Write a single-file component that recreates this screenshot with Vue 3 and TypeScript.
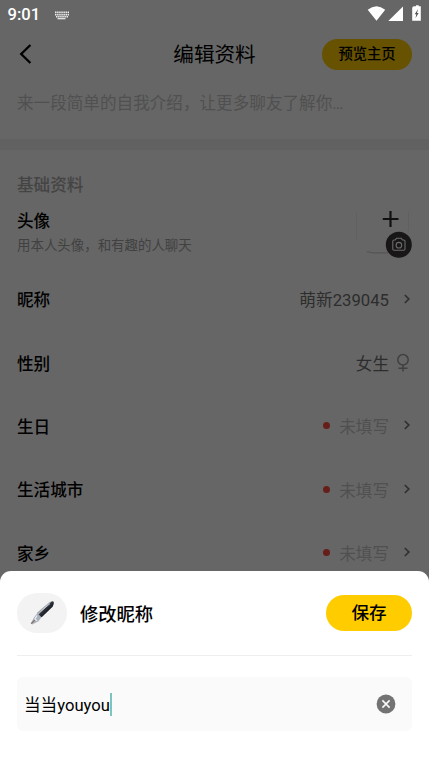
<script setup lang="ts">
interface ProfileRow {
  label: string
  value: string
  kind: 'filled' | 'gender' | 'empty'
}

const rows: ProfileRow[] = [
  { label: '昵称', value: '萌新239045', kind: 'filled' },
  { label: '性别', value: '女生', kind: 'gender' },
  { label: '生日', value: '未填写', kind: 'empty' },
  { label: '生活城市', value: '未填写', kind: 'empty' },
  { label: '家乡', value: '未填写', kind: 'empty' },
]
const nickname = '当当youyou'
</script>

<template>
  <div class="screen">
    <div class="profile">
      <div class="status">
        <span class="clock">9:01</span>
        <svg class="keyboard" width="16" height="9" viewBox="0 0 16 9">
          <path d="M1 1.3H15M1 3.6H15M2 5.7H14" stroke="#eee" stroke-width="1.6" stroke-dasharray="1.5 .6" />
          <path d="M3.5 7.7H11.5" stroke="#eee" stroke-width="1.2" />
        </svg>
        <svg class="signals" width="56" height="18" viewBox="0 0 56 18" fill="#fff">
          <path d="M.7 4.8Q9.5-2.3 18.2 4.8L9.5 15.8Z" />
          <path d="M36 1.4V16H21.3Z" />
          <path d="M47.2 1.3H49V.2H51.7V1.3H53.8V15.7H45.2V3Q45.2 1.3 47.2 1.3Z" />
          <path d="M51.1 4L47.7 9.3H49.3L48.5 13.3L51.6 8H50Z" fill="#555" />
        </svg>
      </div>
      <header class="nav">
        <svg width="14" height="22" viewBox="0 0 14 22" fill="none" stroke="#000" stroke-width="2.3">
          <path d="M12.4 2L3.2 11L12.4 20" />
        </svg>
        <h1>编辑资料</h1>
        <button class="preview">预览主页</button>
      </header>
      <p class="bio">来一段简单的自我介绍，让更多聊友了解你…</p>
      <div class="band"></div>
      <h2>基础资料</h2>
      <div class="avatar-row">
        <div>
          <div class="label">头像</div>
          <div class="hint">用本人头像，和有趣的人聊天</div>
        </div>
        <svg width="60" height="54" viewBox="0 0 60 54" fill="none">
          <path d="M4.5 5V33M56.5 4V24" stroke="#606060" />
          <path d="M15 44.5Q18 45.8 23 45.8H36" stroke="#545454" stroke-width="1.2" />
          <path d="M38.5 4V20M30.8 12H46.5" stroke="#111" stroke-width="2.2" />
          <circle cx="46.8" cy="37.8" r="13" fill="#181617" />
          <path d="M42 33H43.2L44.5 31.3H49.2L50.5 33H51.8Q53 33 53 34.2V42Q53 43.2 51.8 43.2H42Q40.8 43.2 40.8 42V34.2Q40.8 33 42 33Z" stroke="#6c6c6c" stroke-width="1.1" />
          <circle cx="46.9" cy="38.2" r="2.8" stroke="#6c6c6c" stroke-width="1.1" />
        </svg>
      </div>
      <div v-for="row in rows" :key="row.label" class="row" :class="row.kind">
        <span class="label">{{ row.label }}</span>
        <span v-if="row.kind === 'empty'" class="dot"></span>
        <span class="value">{{ row.value }}</span>
        <svg v-if="row.kind === 'gender'" class="female" width="14" height="20" viewBox="0 0 14 20" fill="none" stroke="#404040" stroke-width="1.5">
          <circle cx="7" cy="6.8" r="5.2" />
          <path d="M7 12V18.5M2.5 15.3H11.5" />
        </svg>
        <svg v-else class="chevron" width="8" height="12" viewBox="0 0 8 12" fill="none" stroke="#303030" stroke-width="1.7">
          <path d="M1.8 2L5.8 6L1.8 10" />
        </svg>
      </div>
    </div>

    <section class="sheet">
      <div class="sheet-head">
        <span class="badge">
          <svg width="26" height="26" viewBox="0 0 26 26">
            <defs>
              <linearGradient id="barrel" x1="11" y1="8" x2="17" y2="14" gradientUnits="userSpaceOnUse">
                <stop offset=".1" stop-color="#777f88" />
                <stop offset=".35" stop-color="#b4bac0" />
                <stop offset=".5" stop-color="#30343b" />
                <stop offset="1" stop-color="#15191f" />
              </linearGradient>
            </defs>
            <path d="M8.2 12.8L20.2 2.2Q23.2.4 24.7 1.7Q25.4 4 23.6 6.8L13.2 16.8Q11 18.2 9.5 17Q7.8 15.2 8.2 12.8Z" fill="url(#barrel)" />
            <path d="M8.4 13L12.4 17.2L9.6 21.2L3.2 24.4L2 23.2L5 17.5Z" fill="#a8b1b9" />
            <path d="M8 15.5L5.8 19.3L8.2 20.7" fill="none" stroke="#e7edf1" stroke-width="1.3" />
            <path d="M2.2 23.6L5.8 19.9" stroke="#876d61" stroke-width="1.2" />
            <path d="M12.2 11L21 3.6" stroke="#c6cbd0" stroke-width="1" />
          </svg>
        </span>
        <span class="sheet-title">修改昵称</span>
        <button class="save">保存</button>
      </div>
      <div class="field">
        <span class="field-text">{{ nickname }}</span><i class="caret"></i>
        <svg class="clear" width="20" height="20" viewBox="0 0 20 20">
          <circle cx="10" cy="10" r="9.4" fill="#737373" />
          <path d="M6.4 6.4L13.6 13.6M13.6 6.4L6.4 13.6" stroke="#fafafa" stroke-width="1.6" />
        </svg>
      </div>
    </section>
  </div>
</template>

<style>
body {
  background: #666;
}
</style>

<style scoped>
.screen {
  height: 762px;
  display: flex;
  flex-direction: column;
  overflow: hidden;
  background: #666;
  color: #000;
  font-family: Roboto, "Noto Sans CJK SC", sans-serif;
  font-size: 16.6px;
}
.profile {
  height: 571.4px;
  flex: none;
  overflow: hidden;
}
.screen svg {
  display: block;
  flex: none;
}
button {
  border: 0;
  padding: 0;
  font-family: inherit;
  color: inherit;
}
.status {
  height: 30px;
  display: flex;
  align-items: center;
  padding: 0 6px 0 7.5px;
}
.clock {
  color: #fff;
  font-size: 16.6px;
  font-weight: 500;
  line-height: 30px;
  width: 46.5px;
}
.signals {
  margin: -2px 0 0 auto;
}
.nav {
  height: 48px;
  padding: 0 17px 0 18px;
  display: grid;
  grid-template-columns: 90px 1fr 90px;
  align-items: center;
}
h1 {
  margin: 0;
  padding: 2px 1px 0 0;
  font-size: 20.6px;
  font-weight: 400;
  text-align: center;
  line-height: 30px;
}
.preview {
  height: 31px;
  border-radius: 16px;
  background: #665200;
  font-size: 14.3px;
  font-weight: 500;
  line-height: 30px;
}
.bio {
  margin: 0;
  height: 61px;
  padding-left: 17px;
  line-height: 51px;
  color: #505050;
  white-space: nowrap;
}
.band {
  height: 11px;
  background: #616161;
}
h2 {
  margin: 0;
  padding: 24px 17px 0;
  font-size: 16.6px;
  line-height: 24px;
  font-weight: 500;
  color: #444;
}
.avatar-row {
  height: 70px;
  display: flex;
  justify-content: space-between;
  padding: 11px 17px 0;
  box-sizing: border-box;
}
.label {
  font-weight: 500;
  line-height: 26px;
}
.avatar-row svg {
  margin: -2px 0 0 auto;
}
.hint {
  font-size: 13.45px;
  line-height: 22px;
  color: #414141;
}
.row {
  height: 63.4px;
  display: flex;
  align-items: center;
  padding: 0 17px;
}
.row .label {
  margin-right: auto;
  padding-top: 3px;
}
.value {
  color: #2d2d2d;
}
.filled .value {
  margin-top: -2px;
  font-size: 16.7px;
}
.empty .value {
  color: #505050;
}
.dot {
  width: 7px;
  height: 7px;
  border-radius: 50%;
  background: #651e19;
  margin: -1px 9px 0 0;
}
.chevron {
  margin: -2px 1px 0 14px;
}
.female {
  margin: 0 2px 0 7px;
}
.sheet {
  flex: 1;
  background: #fff;
  border-radius: 11px 11px 0 0;
  padding: 0 17px;
}
.sheet-head {
  height: 84px;
  display: flex;
  align-items: center;
  border-bottom: 1px solid #eee;
}
.badge {
  width: 50px;
  height: 40px;
  border-radius: 20px;
  background: #f3f3f3;
  display: flex;
  align-items: center;
  justify-content: center;
}
.sheet-title {
  margin-left: 13px;
  font-size: 18.3px;
  font-weight: 500;
}
.save {
  margin-left: auto;
  width: 86px;
  height: 36px;
  border-radius: 18px;
  background: #fc0;
  font-size: 17.6px;
  font-weight: 500;
  line-height: 36px;
}
.field {
  margin-top: 21px;
  height: 54px;
  border-radius: 6px;
  background: #fafafa;
  display: flex;
  align-items: center;
  padding: 0 16px 0 7px;
}
.field-text {
  margin-top: -1px;
}
.caret {
  width: 2px;
  height: 23px;
  background: #7cc4bd;
}
.clear {
  margin-left: auto;
}
</style>
